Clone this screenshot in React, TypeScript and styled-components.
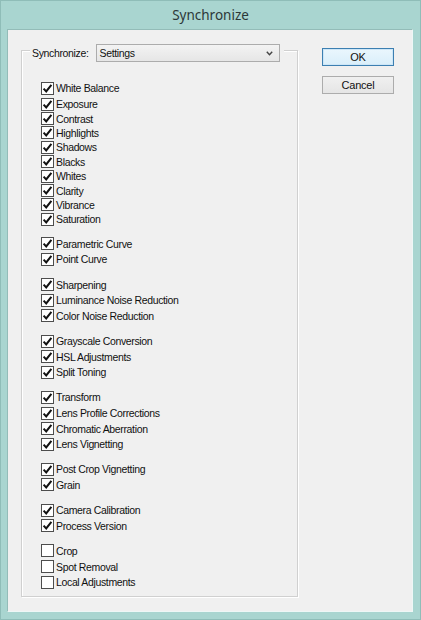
import React from "react";
import styled, { createGlobalStyle } from "styled-components";

const Global = createGlobalStyle`
  html, body { margin: 0; padding: 0; background: #a9d5d0; }
  #root { width: 421px; height: 620px; }
`;

const Window = styled.div`
  width: 421px;
  height: 620px;
  box-sizing: border-box;
  background: #a9d5d0;
  border: 1px solid #8fbdb8;
  display: flex;
  flex-direction: column;
`;

const TitleBar = styled.div`
  height: 28px;
  display: flex;
  align-items: center;
  justify-content: center;
  font-family: "Noto Sans", "Open Sans", sans-serif;
  font-size: 13.5px;
  color: #2c3838;
  padding-bottom: 1px;
  box-sizing: border-box;
`;

const Client = styled.div`
  margin: 0 7px 7px 6px;
  flex: 1;
  background: #f0f0f0;
  border-left: 1px solid #93bcb8;
  border-top: 1px solid #93bcb8;
  border-right: 1px solid #eef7f6;
  border-bottom: 1px solid #eef7f6;
  display: flex;
  align-items: flex-start;
  padding: 8px 0 0 13px;
  font-family: "Liberation Sans", Arial, sans-serif;
  font-size: 10.5px;
  letter-spacing: -0.35px;
  color: #111;
`;

const Group = styled.fieldset`
  width: 277px;
  box-sizing: border-box;
  margin: 0;
  border: 1px solid #d0d0d0;
  box-shadow: inset 1px 1px 0 #fff, 1px 1px 0 #fff;
  padding: 19px 0 6px 19px;
  display: flex;
  flex-direction: column;
`;

const Legend = styled.legend`
  margin-left: -11px;
  padding: 6px 4px 0 2px;
  background: #f0f0f0;
  display: flex;
  align-items: center;
  gap: 7px;
`;

const Dropdown = styled.div`
  width: 184px;
  height: 18px;
  box-sizing: border-box;
  border: 1px solid #acacac;
  background: linear-gradient(#f3f3f3, #e6e6e6);
  display: flex;
  align-items: center;
  justify-content: space-between;
  padding: 0 6px 0 3px;
`;

const Section = styled.div<{ $first?: boolean }>`
  display: flex;
  flex-direction: column;
  margin-top: ${(p) => (p.$first ? "0" : "9.6px")};
`;

const Row = styled.label<{ $h: number; $mb?: number }>`
  height: ${(p) => p.$h}px;
  margin-bottom: ${(p) => p.$mb ?? 0}px;
  display: flex;
  align-items: center;
  gap: 2px;
  white-space: nowrap;
`;

const Box = styled.span`
  width: 13px;
  height: 13px;
  box-sizing: border-box;
  border: 1px solid #4d4d4d;
  background: #fff;
  display: inline-flex;
  align-items: center;
  justify-content: center;
  flex: none;
`;

const Buttons = styled.div`
  margin: 10px 0 0 24px;
  display: flex;
  flex-direction: column;
  gap: 10px;
`;

const Button = styled.div<{ $default?: boolean }>`
  width: 72px;
  height: 18px;
  box-sizing: border-box;
  display: flex;
  align-items: center;
  justify-content: center;
  border: 1px solid ${(p) => (p.$default ? "#3c7fb1" : "#acacac")};
  background: ${(p) =>
    p.$default
      ? "linear-gradient(#eaf6fd, #d9eefa)"
      : "linear-gradient(#f0f0f0, #e5e5e5)"};
  box-shadow: ${(p) => (p.$default ? "inset 0 0 0 1px #cde6f7" : "none")};
  font-size: 11px;
  letter-spacing: -0.2px;
`;

const Check = () => (
  <svg width="11" height="11" viewBox="0 0 11 11">
    <path d="M1.6 5.6 L4.2 8.4 L9.4 1.8" fill="none" stroke="#111" strokeWidth="2" />
  </svg>
);

const Chevron = () => (
  <svg width="7" height="5" viewBox="0 0 7 5">
    <path d="M0.8 0.8 L3.5 3.8 L6.2 0.8" fill="none" stroke="#444" strokeWidth="1.4" />
  </svg>
);

const groups: { label: string; checked: boolean }[][] = [
  [
    "White Balance",
    "Exposure",
    "Contrast",
    "Highlights",
    "Shadows",
    "Blacks",
    "Whites",
    "Clarity",
    "Vibrance",
    "Saturation",
  ].map((l) => ({ label: l, checked: true })),
  ["Parametric Curve", "Point Curve"].map((l) => ({ label: l, checked: true })),
  ["Sharpening", "Luminance Noise Reduction", "Color Noise Reduction"].map((l) => ({ label: l, checked: true })),
  ["Grayscale Conversion", "HSL Adjustments", "Split Toning"].map((l) => ({ label: l, checked: true })),
  ["Transform", "Lens Profile Corrections", "Chromatic Aberration", "Lens Vignetting"].map((l) => ({ label: l, checked: true })),
  ["Post Crop Vignetting", "Grain"].map((l) => ({ label: l, checked: true })),
  ["Camera Calibration", "Process Version"].map((l) => ({ label: l, checked: true })),
  ["Crop", "Spot Removal", "Local Adjustments"].map((l) => ({ label: l, checked: false })),
];

export default function App() {
  return (
    <>
      <Global />
      <Window>
        <TitleBar>Synchronize</TitleBar>
        <Client>
          <Group>
            <Legend>
              <span>Synchronize:</span>
              <Dropdown>
                <span>Settings</span>
                <Chevron />
              </Dropdown>
            </Legend>
            {groups.map((g, gi) => (
              <Section key={gi} $first={gi === 0}>
                {g.map((item, i) => (
                  <Row
                    key={item.label}
                    $h={gi === 0 ? 14.4 : 15.6}
                    $mb={gi === 0 && i === 0 ? 1.6 : 0}
                  >
                    <Box>{item.checked && <Check />}</Box>
                    <span>{item.label}</span>
                  </Row>
                ))}
              </Section>
            ))}
          </Group>
          <Buttons>
            <Button $default>OK</Button>
            <Button>Cancel</Button>
          </Buttons>
        </Client>
      </Window>
    </>
  );
}
